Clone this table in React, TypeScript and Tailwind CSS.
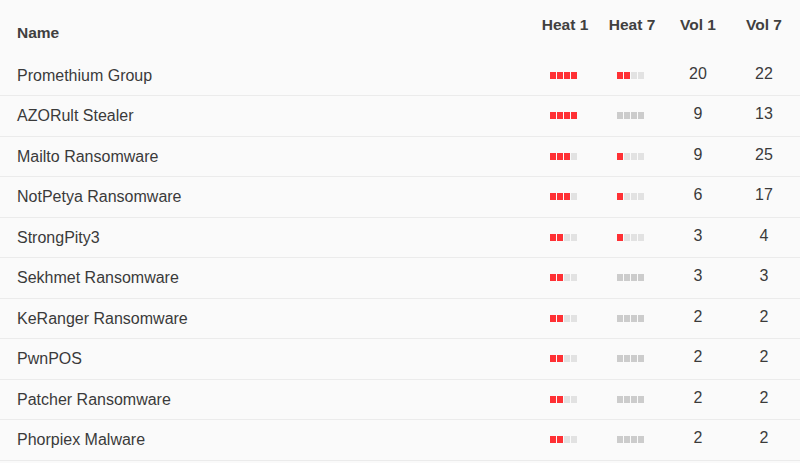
import React from 'react';

type Row = { name: string; heat1: number; heat7: number; vol1: number; vol7: number };

const rows: Row[] = [
    { name: 'Promethium Group', heat1: 4, heat7: 2, vol1: 20, vol7: 22 },
    { name: 'AZORult Stealer', heat1: 4, heat7: 0, vol1: 9, vol7: 13 },
    { name: 'Mailto Ransomware', heat1: 3, heat7: 1, vol1: 9, vol7: 25 },
    { name: 'NotPetya Ransomware', heat1: 3, heat7: 1, vol1: 6, vol7: 17 },
    { name: 'StrongPity3', heat1: 2, heat7: 1, vol1: 3, vol7: 4 },
    { name: 'Sekhmet Ransomware', heat1: 2, heat7: 0, vol1: 3, vol7: 3 },
    { name: 'KeRanger Ransomware', heat1: 2, heat7: 0, vol1: 2, vol7: 2 },
    { name: 'PwnPOS', heat1: 2, heat7: 0, vol1: 2, vol7: 2 },
    { name: 'Patcher Ransomware', heat1: 2, heat7: 0, vol1: 2, vol7: 2 },
    { name: 'Phorpiex Malware', heat1: 2, heat7: 0, vol1: 2, vol7: 2 },
];

function Heat({ level }: { level: number }) {
    // zero heat shows the bar in a darker grey
    const empty = level === 0 ? 'bg-[#cccccc]' : 'bg-[#e2e2e2]';
    return (
        <div className="flex justify-center gap-[1px] mr-[3px]">
            {[0, 1, 2, 3].map((i) => (
                <span
                    key={i}
                    className={`block w-[6px] h-[7px] ${i < level ? 'bg-[#ff3034]' : empty}`}
                />
            ))}
        </div>
    );
}

const grid = 'grid grid-cols-[1fr_68px_66px_66px_66px] pr-[3px] items-center';

export default function App() {
    return (
        <div
            className="w-[800px] h-[463px] bg-[#fafafa] text-[#3a3a3a] overflow-hidden"
            style={{ fontFamily: '"Liberation Sans", Arial, sans-serif' }}
        >
            <div className={`${grid} h-[55.5px] pb-[1px] font-bold text-[15.5px] text-[#404040]`}>
                <div className="pl-[17px] pt-[10px]">Name</div>
                <div className="text-center -mt-[5px]">Heat 1</div>
                <div className="text-center -mt-[5px]">Heat 7</div>
                <div className="text-center -mt-[5px]">Vol 1</div>
                <div className="text-center -mt-[5px]">Vol 7</div>
            </div>
            {rows.map((r) => (
                <div
                    key={r.name}
                    className={`${grid} h-[40.5px] border-b border-[#ebebeb] text-[16px]`}
                >
                    <div className="pl-[17px] pt-[1px]">{r.name}</div>
                    <Heat level={r.heat1} />
                    <Heat level={r.heat7} />
                    <div className="text-center -mt-[3px]">{r.vol1}</div>
                    <div className="text-center -mt-[3px]">{r.vol7}</div>
                </div>
            ))}
        </div>
    );
}
